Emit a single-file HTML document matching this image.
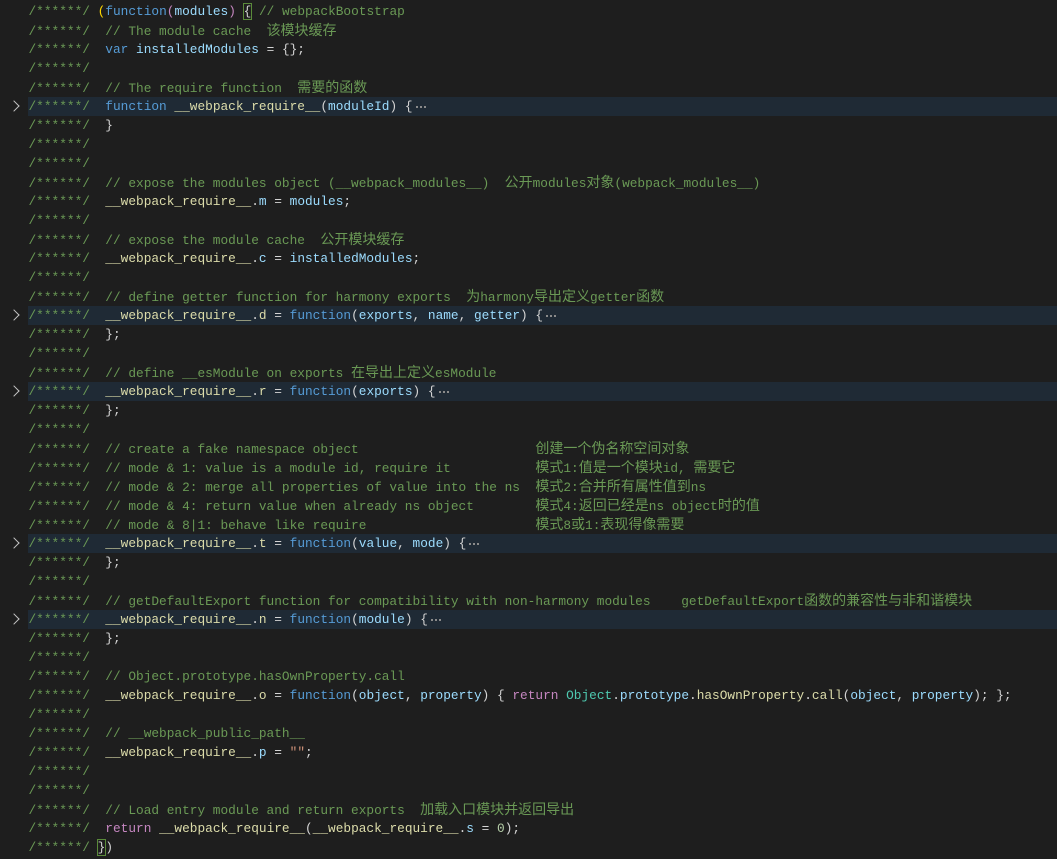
<!DOCTYPE html>
<html><head><meta charset="utf-8"><style>
html,body{margin:0;padding:0;background:#1e1e1e;width:1057px;height:859px;overflow:hidden}
.ed{position:absolute;left:0;top:1.5px;width:1057px}
.l{position:relative;height:19px;line-height:19px;white-space:pre;font-family:"Liberation Mono","Noto Sans CJK SC",monospace;font-size:12.8px;color:#d4d4d4;padding-left:28.5px}
.f{background:#1f2a35}
.f::before{content:"";position:absolute;left:0;top:0;width:28px;height:19px;background:#1e1e1e}
.ch{position:absolute;left:10px;top:5px;width:7px;height:7px;border-right:1.7px solid #c5c5c5;border-bottom:1.7px solid #c5c5c5;transform:rotate(-45deg);z-index:2}
.c{color:#6a9955}
.k{color:#569cd6}
.fn{color:#dcdcaa}
.v{color:#9cdcfe}
.cls{color:#4ec9b0}
.kc{color:#c586c0}
.s{color:#ce9178}
.j{font-family:"Noto Sans CJK SC","WenQuanYi Zen Hei",sans-serif;font-size:14px}
.el{display:inline-block;width:12px;height:19px;vertical-align:top;position:relative;margin-left:2px}
.el::before{content:"";position:absolute;left:1px;top:9px;width:2px;height:2px;background:#8a8a8a;box-shadow:4px 0 0 #8a8a8a,8px 0 0 #8a8a8a}
.bx{outline:1px solid #5a8a3a}
.y{color:#ffd700}
</style></head><body><div class="ed">
<div class="l"><span class="c">/******/</span> <span class="y">(</span><span class="k">function</span><span class="kc">(</span><span class="v">modules</span><span class="kc">)</span> <span class="bx">{</span> <span class="c">// webpackBootstrap</span></div>
<div class="l"><span class="c">/******/  // The module cache  <span class="j">该模块缓存</span></span></div>
<div class="l"><span class="c">/******/</span>  <span class="k">var</span> <span class="v">installedModules</span> = {};</div>
<div class="l"><span class="c">/******/</span></div>
<div class="l"><span class="c">/******/  // The require function  <span class="j">需要的函数</span></span></div>
<div class="l f"><span class="ch"></span><span class="c">/******/</span>  <span class="k">function</span> <span class="fn">__webpack_require__</span>(<span class="v">moduleId</span>) {<span class="el"></span></div>
<div class="l"><span class="c">/******/</span>  }</div>
<div class="l"><span class="c">/******/</span></div>
<div class="l"><span class="c">/******/</span></div>
<div class="l"><span class="c">/******/  // expose the modules object (__webpack_modules__)  <span class="j">公开</span>modules<span class="j">对象</span>(webpack_modules__)</span></div>
<div class="l"><span class="c">/******/</span>  <span class="fn">__webpack_require__</span>.<span class="v">m</span> = <span class="v">modules</span>;</div>
<div class="l"><span class="c">/******/</span></div>
<div class="l"><span class="c">/******/  // expose the module cache  <span class="j">公开模块缓存</span></span></div>
<div class="l"><span class="c">/******/</span>  <span class="fn">__webpack_require__</span>.<span class="v">c</span> = <span class="v">installedModules</span>;</div>
<div class="l"><span class="c">/******/</span></div>
<div class="l"><span class="c">/******/  // define getter function for harmony exports  <span class="j">为</span>harmony<span class="j">导出定义</span>getter<span class="j">函数</span></span></div>
<div class="l f"><span class="ch"></span><span class="c">/******/</span>  <span class="fn">__webpack_require__</span>.<span class="fn">d</span> = <span class="k">function</span>(<span class="v">exports</span>, <span class="v">name</span>, <span class="v">getter</span>) {<span class="el"></span></div>
<div class="l"><span class="c">/******/</span>  };</div>
<div class="l"><span class="c">/******/</span></div>
<div class="l"><span class="c">/******/  // define __esModule on exports <span class="j">在导出上定义</span>esModule</span></div>
<div class="l f"><span class="ch"></span><span class="c">/******/</span>  <span class="fn">__webpack_require__</span>.<span class="fn">r</span> = <span class="k">function</span>(<span class="v">exports</span>) {<span class="el"></span></div>
<div class="l"><span class="c">/******/</span>  };</div>
<div class="l"><span class="c">/******/</span></div>
<div class="l"><span class="c">/******/  // create a fake namespace object                       <span class="j">创建一个伪名称空间对象</span></span></div>
<div class="l"><span class="c">/******/  // mode &amp; 1: value is a module id, require it           <span class="j">模式</span>1:<span class="j">值是一个模块</span>id, <span class="j">需要它</span></span></div>
<div class="l"><span class="c">/******/  // mode &amp; 2: merge all properties of value into the ns  <span class="j">模式</span>2:<span class="j">合并所有属性值到</span>ns</span></div>
<div class="l"><span class="c">/******/  // mode &amp; 4: return value when already ns object        <span class="j">模式</span>4:<span class="j">返回已经是</span>ns object<span class="j">时的值</span></span></div>
<div class="l"><span class="c">/******/  // mode &amp; 8|1: behave like require                      <span class="j">模式</span>8<span class="j">或</span>1:<span class="j">表现得像需要</span></span></div>
<div class="l f"><span class="ch"></span><span class="c">/******/</span>  <span class="fn">__webpack_require__</span>.<span class="fn">t</span> = <span class="k">function</span>(<span class="v">value</span>, <span class="v">mode</span>) {<span class="el"></span></div>
<div class="l"><span class="c">/******/</span>  };</div>
<div class="l"><span class="c">/******/</span></div>
<div class="l"><span class="c">/******/  // getDefaultExport function for compatibility with non-harmony modules    getDefaultExport<span class="j">函数的兼容性与非和谐模块</span></span></div>
<div class="l f"><span class="ch"></span><span class="c">/******/</span>  <span class="fn">__webpack_require__</span>.<span class="fn">n</span> = <span class="k">function</span>(<span class="v">module</span>) {<span class="el"></span></div>
<div class="l"><span class="c">/******/</span>  };</div>
<div class="l"><span class="c">/******/</span></div>
<div class="l"><span class="c">/******/  // Object.prototype.hasOwnProperty.call</span></div>
<div class="l"><span class="c">/******/</span>  <span class="fn">__webpack_require__</span>.<span class="fn">o</span> = <span class="k">function</span>(<span class="v">object</span>, <span class="v">property</span>) { <span class="kc">return</span> <span class="cls">Object</span>.<span class="v">prototype</span>.<span class="fn">hasOwnProperty</span>.<span class="fn">call</span>(<span class="v">object</span>, <span class="v">property</span>); };</div>
<div class="l"><span class="c">/******/</span></div>
<div class="l"><span class="c">/******/  // __webpack_public_path__</span></div>
<div class="l"><span class="c">/******/</span>  <span class="fn">__webpack_require__</span>.<span class="v">p</span> = <span class="s">""</span>;</div>
<div class="l"><span class="c">/******/</span></div>
<div class="l"><span class="c">/******/</span></div>
<div class="l"><span class="c">/******/  // Load entry module and return exports  <span class="j">加载入口模块并返回导出</span></span></div>
<div class="l"><span class="c">/******/</span>  <span class="kc">return</span> <span class="fn">__webpack_require__</span>(<span class="fn">__webpack_require__</span>.<span class="v">s</span> = <span class="s" style="color:#b5cea8">0</span>);</div>
<div class="l"><span class="c">/******/</span> <span class="bx">}</span>)</div>
</div></body></html>
